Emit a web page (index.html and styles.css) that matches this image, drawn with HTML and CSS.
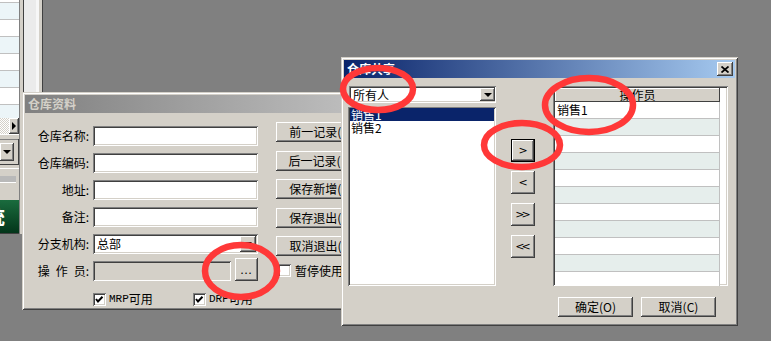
FILE: index.html
```html
<!DOCTYPE html>
<html lang="zh-CN">
<head>
<meta charset="utf-8">
<title>仓库共享</title>
<link rel="stylesheet" href="styles.css">
</head>
<body>
<div class="desktop">

  <div class="bgwin">
    <div class="bg-main">
      <div class="bg-list">
        <div class="bg-row first"></div>
        <div class="bg-row"></div>
        <div class="bg-row"></div>
        <div class="bg-row"></div>
        <div class="bg-row"></div>
        <div class="bg-row"></div>
        <div class="bg-row"></div>
        <div class="bg-row"></div>
      </div>
      <div class="bg-hscroll">
        <div class="bg-track"></div>
        <div class="bg-sbtn raised"><span class="tri-right"></span></div>
      </div>
      <div class="bg-combo-panel">
        <div class="bg-combo">
          <div class="bg-drop raised"><span class="tri-down"></span></div>
        </div>
      </div>
      <div class="bg-status"><div class="bg-bar"></div></div>
      <div class="bg-green"><span>统</span></div>
    </div>
    <div class="bg-side"></div>
  </div>

  <div class="win win-info">
    <div class="title inactive">仓库资料</div>
    <div class="info-body">
      <div class="form">
        <span class="lbl">仓库名称:</span><div class="field"></div>
        <span class="lbl">仓库编码:</span><div class="field"></div>
        <span class="lbl">地址:</span><div class="field"></div>
        <span class="lbl">备注:</span><div class="field"></div>
        <span class="lbl">分支机构:</span>
        <div class="field combo"><span class="val">总部</span><div class="drop raised"><span class="tri-down"></span></div></div>
        <span class="lbl">操&ensp;作&ensp;员:</span>
        <div class="op-row"><div class="field disabled"></div><div class="btn dots raised">...</div></div>
        <span></span>
        <div class="checks">
          <span class="chk"><span class="box"><svg width="9" height="9" viewBox="0 0 9 9"><polyline points="1,4 3,6.5 7.5,1.8" fill="none" stroke="#000" stroke-width="2"/></svg></span><span class="latin">MRP</span>可用</span>
          <span class="chk"><span class="box"><svg width="9" height="9" viewBox="0 0 9 9"><polyline points="1,4 3,6.5 7.5,1.8" fill="none" stroke="#000" stroke-width="2"/></svg></span><span class="latin">DRP</span>可用</span>
        </div>
      </div>
      <div class="actions">
        <div class="btn act raised">前一记录(P)</div>
        <div class="btn act raised">后一记录(N)</div>
        <div class="btn act raised">保存新增(A)</div>
        <div class="btn act raised">保存退出(S)</div>
        <div class="btn act raised">取消退出(X)</div>
        <span class="chk pause"><span class="box"></span>暂停使用</span>
      </div>
    </div>
  </div>

  <div class="win win-share">
    <div class="title active">
      <span>仓库共享</span>
      <div class="close raised"><svg width="8" height="7" viewBox="0 0 8 7"><path d="M0.5 0.5 L7.5 6.5 M7.5 0.5 L0.5 6.5" stroke="#000" stroke-width="1.7" fill="none"/></svg></div>
    </div>
    <div class="share-body">
      <div class="left-col">
        <div class="field combo sel"><span class="val">所有人</span><div class="drop raised"><span class="tri-down"></span></div></div>
        <div class="listbox">
          <div class="item selected">销售1</div>
          <div class="item">销售2</div>
        </div>
      </div>
      <div class="mid-col">
        <div class="btn mv raised focus">&gt;</div>
        <div class="btn mv raised">&lt;</div>
        <div class="btn mv raised dbl">&gt;&gt;</div>
        <div class="btn mv raised dbl">&lt;&lt;</div>
      </div>
      <div class="grid">
        <div class="gh">操作员</div>
        <div class="gr">销售1</div>
        <div class="gr"></div>
        <div class="gr"></div>
        <div class="gr"></div>
        <div class="gr"></div>
        <div class="gr"></div>
        <div class="gr"></div>
        <div class="gr"></div>
        <div class="gr"></div>
        <div class="gr"></div>
        <div class="gr"></div>
      </div>
    </div>
    <div class="share-foot">
      <div class="btn ok raised">确定(O)</div>
      <div class="btn ok raised">取消(C)</div>
    </div>
  </div>

  <svg class="marks" width="771" height="341" viewBox="0 0 771 341">
    <ellipse cx="241" cy="271" rx="36" ry="26" />
    <ellipse cx="378" cy="89" rx="35" ry="21" />
    <ellipse cx="522" cy="145" rx="38" ry="22" />
    <ellipse cx="589" cy="105" rx="44" ry="27" />
  </svg>
</div>
</body>
</html>
```

FILE: styles.css
```css
* { box-sizing: border-box; margin: 0; padding: 0; }
html, body { width: 771px; height: 341px; overflow: hidden; }
body {
  background: #808080;
  font-family: "Noto Sans CJK SC", "Noto Sans", sans-serif;
  font-size: 12px;
  line-height: 1;
  color: #000;
}
.desktop { position: relative; width: 771px; height: 341px; }

/* 3D helpers */
.raised {
  background: #d4d0c8;
  box-shadow: inset -1px -1px #404040, inset 1px 1px #fff, inset -2px -2px #808080, inset 2px 2px #d4d0c8;
}
.tri-down {
  width: 0; height: 0;
  border-left: 4px solid transparent;
  border-right: 4px solid transparent;
  border-top: 4px solid #000;
}
.tri-right {
  width: 0; height: 0;
  border-top: 4px solid transparent;
  border-bottom: 4px solid transparent;
  border-left: 4px solid #000;
}

/* background window on the left */
.bgwin {
  position: absolute; left: 0; top: 0;
  width: 43px; height: 234px;
  display: flex;
  background: #d4d0c8;
}
.bg-main {
  width: 20px;
  display: flex; flex-direction: column;
  border-right: 1px solid #808080;
}
.bg-list { height: 118px; overflow: hidden; background: #fff; }
.bg-row { height: 17px; border-bottom: 1px solid #c0c0c0; background: #fff; }
.bg-row:nth-child(even) { background: #ecf5f8; }
.bg-row.first { margin-top: -14px; }
.bg-hscroll { height: 16px; display: flex; }
.bg-track {
  flex: 1;
  background: repeating-conic-gradient(#fff 0 25%, #d4d0c8 0 50%) 0 0 / 2px 2px;
}
.bg-sbtn { width: 10px; display: flex; align-items: center; justify-content: center; }
.bg-combo-panel {
  height: 34px;
  padding: 5px 0 3px 0;
  box-shadow: inset 0 1px #fff;
}
.bg-combo {
  height: 26px;
  padding: 4px 6px 3px 0;
  box-shadow: inset -1px -1px #404040, inset 0 1px #808080;
}
.bg-drop { width: 14px; height: 18px; display: flex; align-items: center; justify-content: center; }
.bg-status { height: 32px; padding-top: 8px; box-shadow: inset 0 1px #fff; }
.bg-bar { width: 16px; height: 7px; background: #b9b9b9; box-shadow: inset 0 -1px #fff; }
.bg-green {
  height: 34px;
  background: linear-gradient(#1a6c3e, #03351a);
  border-bottom: 1px solid #404040;
  color: #fff;
  font-weight: bold;
  font-size: 20px;
  line-height: 33px;
  overflow: hidden;
  white-space: nowrap;
}
.bg-green span { display: inline-block; margin-left: -15px; }
.bg-side {
  flex: 1;
  background: linear-gradient(90deg, #d4d0c8 0 3px, #404040 3px 4px, #ebebeb 4px 16px, #f7f7f7 16px 19px, #d4d0c8 19px 22px, #404040 22px 23px);
}

/* windows */
.win {
  position: absolute;
  background: #d4d0c8;
  padding: 3px;
  box-shadow: inset 1px 1px #d4d0c8, inset -1px -1px #404040, inset 2px 2px #fff, inset -2px -2px #808080;
}
.title {
  height: 18px;
  display: flex; align-items: center; justify-content: space-between;
  padding: 0 2px 0 3px;
  font-weight: bold;
  color: #fff;
  white-space: nowrap;
}
.title.inactive { background: linear-gradient(90deg, #808080, #c0c0c0); color: #d4d0c8; }
.title.active { background: linear-gradient(90deg, #0a246a, #a6caf0); }
.close { width: 16px; height: 14px; display: flex; align-items: center; justify-content: center; }

/* generic field */
.field {
  height: 20px;
  background: #fff;
  box-shadow: inset 1px 1px #808080, inset -1px -1px #fff, inset 2px 2px #404040, inset -2px -2px #d4d0c8;
}
.field.disabled { background: #d4d0c8; }
.field.combo { display: flex; align-items: center; justify-content: space-between; padding: 2px; }
.field.combo .val { padding-left: 2px; }
.drop { width: 16px; height: 100%; display: flex; align-items: center; justify-content: center; }

.btn { display: flex; align-items: center; justify-content: center; white-space: nowrap; }

/* 仓库资料 */
.win-info { left: 22px; top: 92px; width: 345px; height: 218px; overflow: hidden; }
.info-body { display: flex; }
.form {
  margin-top: 13px;
  display: grid;
  grid-template-columns: 64px 165px;
  grid-auto-rows: 20px;
  column-gap: 4px;
  row-gap: 7px;
  align-items: center;
}
.lbl { text-align: right; white-space: nowrap; }
.op-row { display: flex; align-items: flex-end; gap: 4px; height: 20px; }
.op-row .field { flex: 1; }
.btn.dots { width: 23px; height: 23px; margin-top: -3px; letter-spacing: 1px; font-size: 11px; }
.checks { display: flex; height: 20px; align-items: center; margin-top: 2px; overflow: visible; }
.chk { display: inline-flex; align-items: center; white-space: nowrap; }
.checks .chk { width: 100px; flex-shrink: 0; }
.box {
  width: 13px; height: 13px;
  margin-right: 3px;
  background: #fff;
  padding: 2px;
  display: inline-flex;
  flex-shrink: 0;
  box-shadow: inset 1px 1px #808080, inset -1px -1px #fff, inset 2px 2px #404040, inset -2px -2px #d4d0c8;
}
.latin { font-family: "Liberation Mono", monospace; font-size: 11px; }
.actions {
  margin-top: 9px;
  margin-left: 18px;
  display: flex; flex-direction: column;
  gap: 8.5px;
}
.btn.act { width: 90px; height: 20px; }
.pause { margin-top: -0.5px; padding-left: 2px; }
.pause .box { margin-right: 4px; }

/* 仓库共享 */
.win-share { left: 341px; top: 57px; width: 397px; height: 269px; }
.share-body {
  margin-top: 8px;
  padding-left: 4px;
  display: grid;
  grid-template-columns: 148px 24px 178px;
  column-gap: 15px;
  height: 200px;
}
.share-body .grid { margin-left: 3px; }
.left-col { display: flex; flex-direction: column; gap: 4px; }
.field.sel { height: 17px; margin-left: 1px; padding: 2px 1px 2px 2px; }
.field.sel .drop { width: 15px; }
.listbox {
  flex: 1;
  background: #fff;
  padding: 1px 2px;
  box-shadow: inset 1px 1px #808080, inset -1px -1px #fff, inset 2px 2px #404040, inset -2px -2px #d4d0c8;
}
.item { height: 13px; line-height: 13px; padding-left: 1px; }
.item.selected { background: #0a246a; color: #fff; }
.mid-col { padding-top: 53px; display: flex; flex-direction: column; gap: 9px; }
.btn.mv { height: 23px; font-family: "DejaVu Sans", sans-serif; font-size: 11px; }
.btn.mv.focus { border: 1px solid #000; }
.btn.mv.dbl { letter-spacing: -3px; padding-right: 3px; }
.grid {
  background: #fff;
  padding: 2px;
  overflow: hidden;
  box-shadow: inset 1px 1px #808080, inset -1px -1px #fff, inset 2px 2px #404040, inset -2px -2px #d4d0c8;
}
.gh {
  width: 165px; height: 14px;
  display: flex; align-items: center; justify-content: center;
  background: #d4d0c8;
  box-shadow: inset -1px -1px #404040, inset 1px 1px #fff;
}
.gr {
  width: 165px; height: 17px;
  padding-left: 2px;
  line-height: 16px;
  border-bottom: 1px solid #c0c0c0;
  border-right: 1px solid #c0c0c0;
  background: #fff;
}
.gr:nth-of-type(odd) { background: #e6eeec; }
.share-foot {
  margin-top: 11px;
  padding-right: 19px;
  display: flex; justify-content: flex-end;
  gap: 8px;
}
.btn.ok { width: 75px; height: 20px; }

/* annotation circles */
.marks {
  position: absolute; left: 0; top: 0;
  pointer-events: none;
}
.marks ellipse { fill: none; stroke: #ff3838; stroke-width: 6.5; }
```
